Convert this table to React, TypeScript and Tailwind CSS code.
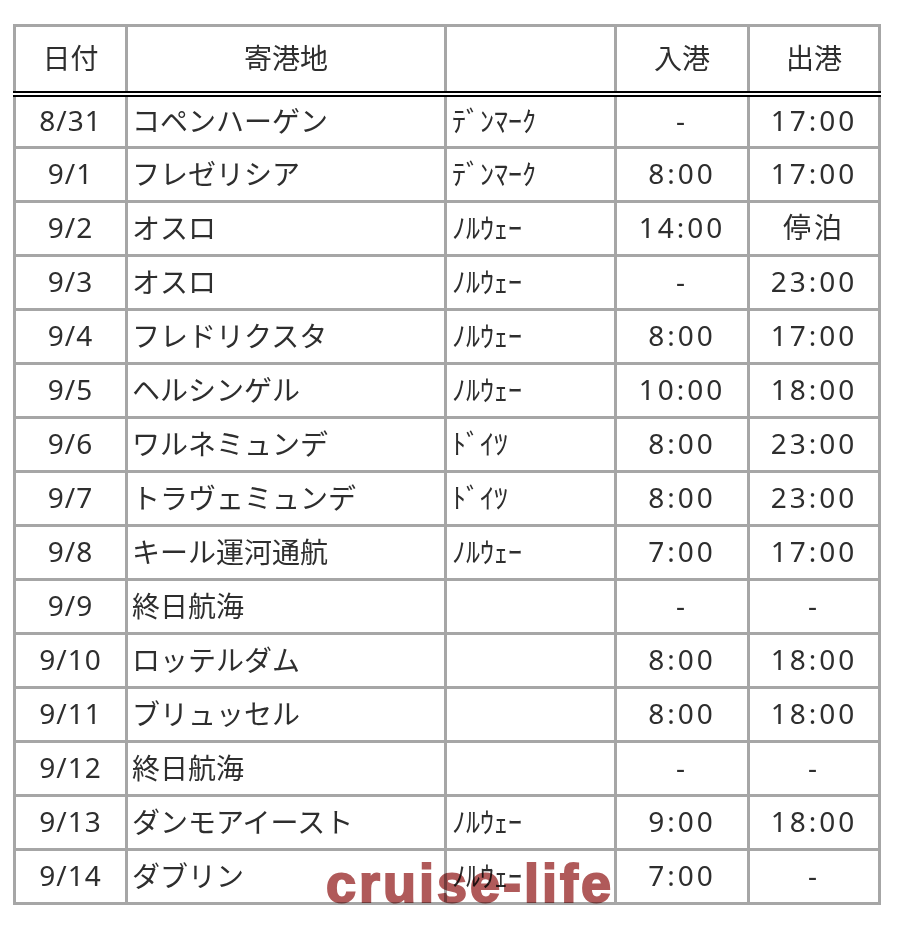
import React from "react"

interface Stop {
  date: string
  port: string
  country: string
  arrive: string
  depart: string
}

const stops: Stop[] = [
  { date: "8/31", port: "コペンハーゲン", country: "ﾃﾞﾝﾏｰｸ", arrive: "-", depart: "17:00" },
  { date: "9/1", port: "フレゼリシア", country: "ﾃﾞﾝﾏｰｸ", arrive: "8:00", depart: "17:00" },
  { date: "9/2", port: "オスロ", country: "ﾉﾙｳｪｰ", arrive: "14:00", depart: "停泊" },
  { date: "9/3", port: "オスロ", country: "ﾉﾙｳｪｰ", arrive: "-", depart: "23:00" },
  { date: "9/4", port: "フレドリクスタ", country: "ﾉﾙｳｪｰ", arrive: "8:00", depart: "17:00" },
  { date: "9/5", port: "ヘルシンゲル", country: "ﾉﾙｳｪｰ", arrive: "10:00", depart: "18:00" },
  { date: "9/6", port: "ワルネミュンデ", country: "ﾄﾞｲﾂ", arrive: "8:00", depart: "23:00" },
  { date: "9/7", port: "トラヴェミュンデ", country: "ﾄﾞｲﾂ", arrive: "8:00", depart: "23:00" },
  { date: "9/8", port: "キール運河通航", country: "ﾉﾙｳｪｰ", arrive: "7:00", depart: "17:00" },
  { date: "9/9", port: "終日航海", country: "", arrive: "-", depart: "-" },
  { date: "9/10", port: "ロッテルダム", country: "", arrive: "8:00", depart: "18:00" },
  { date: "9/11", port: "ブリュッセル", country: "", arrive: "8:00", depart: "18:00" },
  { date: "9/12", port: "終日航海", country: "", arrive: "-", depart: "-" },
  { date: "9/13", port: "ダンモアイースト", country: "ﾉﾙｳｪｰ", arrive: "9:00", depart: "18:00" },
  { date: "9/14", port: "ダブリン", country: "ﾉﾙｳｪｰ", arrive: "7:00", depart: "-" },
]

const cell = "border-[3px] border-[#a6a6a6] p-0"
const head = `${cell} font-normal border-b-[6px] border-b-black [border-bottom-style:double] pb-[3px]`
const num = "text-center tracking-[1px] font-['Noto_Sans','Noto_Sans_CJK_JP',sans-serif]"
const time = "text-center tracking-[3px] font-['Noto_Sans','Noto_Sans_CJK_JP',sans-serif]"

export default function App() {
  return (
    <div className="relative min-h-[932px] w-[904px] bg-white pl-[13px] pt-[24px] text-[28px] text-[#2e2e2e] font-['Noto_Sans_CJK_JP',sans-serif]">
      <table className="w-[865px] table-fixed border-collapse">
        <colgroup>
          <col className="w-[112px]" />
          <col className="w-[319px]" />
          <col className="w-[170px]" />
          <col className="w-[133px]" />
          <col className="w-[131px]" />
        </colgroup>
        <thead>
          <tr className="h-[68px]">
            <th className={head}>日付</th>
            <th className={head}>寄港地</th>
            <th className={head}></th>
            <th className={head}>入港</th>
            <th className={head}>出港</th>
          </tr>
        </thead>
        <tbody>
          {stops.map((s, i) => (
            <tr key={i} className="h-[54px]">
              <td className={`${cell} ${num} pb-[3px]`}>{s.date}</td>
              <td className={`${cell} pl-[4px] pb-[3px] leading-none`}>{s.port}</td>
              <td className={`${cell} pl-[5px] pb-[3px] leading-none`}>{s.country}</td>
              <td className={`${cell} ${time} pb-[3px]`}>{s.arrive}</td>
              <td className={`${cell} ${time} pb-[3px]`}>{s.depart}</td>
            </tr>
          ))}
        </tbody>
      </table>
      <div className="pointer-events-none absolute left-[326px] top-[856px] text-[54px] font-bold leading-none tracking-[3px] text-[#b05a5a] mix-blend-multiply [-webkit-text-stroke:2px_#b05a5a] font-['Liberation_Sans',Arial,sans-serif]">
        cruise-life
      </div>
    </div>
  )
}
